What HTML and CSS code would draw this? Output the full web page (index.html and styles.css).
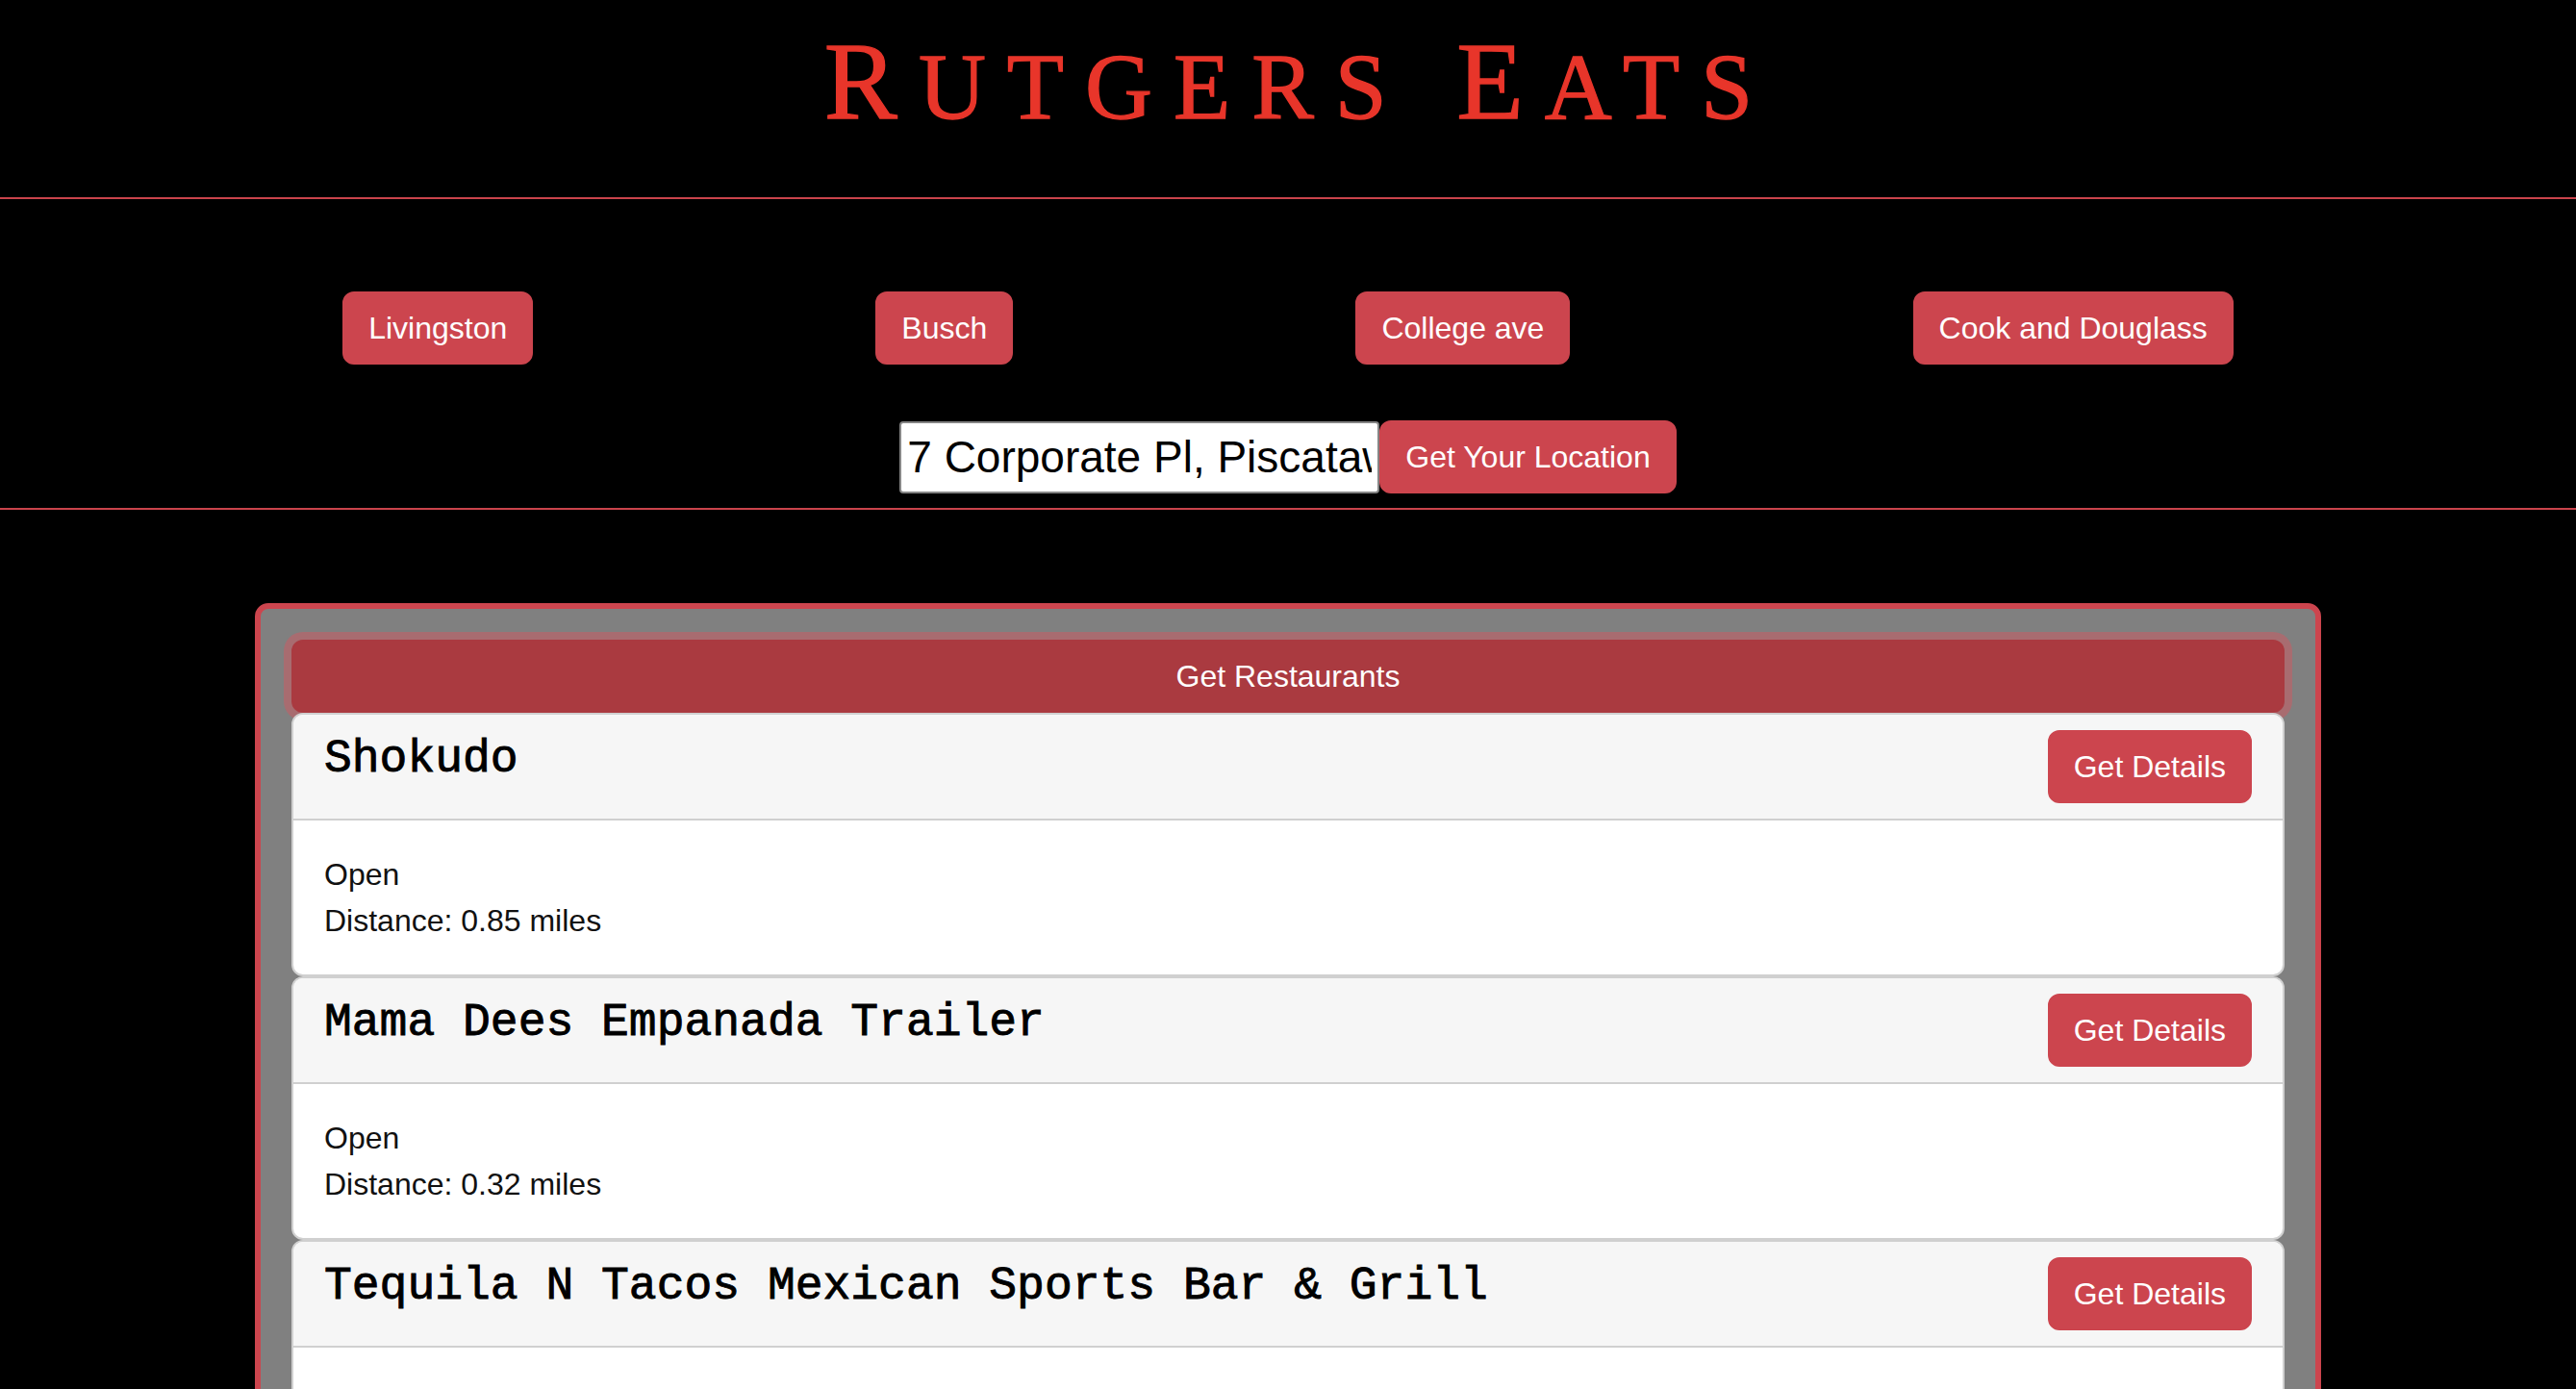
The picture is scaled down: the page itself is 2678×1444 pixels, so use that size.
FILE: index.html
```html
<!DOCTYPE html>
<html lang="en">
<head>
<meta charset="utf-8">
<title>Rutgers Eats</title>
<link rel="stylesheet" href="styles.css">
</head>
<body>
<header class="site-header">
  <h1 class="brand"><span class="brand-cap">R</span><span class="brand-sc">utgers</span> <span class="brand-cap">E</span><span class="brand-sc">ats</span></h1>
</header>
<hr class="rule">
<section class="controls">
  <div class="campus-row">
    <button class="btn">Livingston</button>
    <button class="btn">Busch</button>
    <button class="btn">College ave</button>
    <button class="btn">Cook and Douglass</button>
  </div>
  <div class="location-row">
    <input class="location-input" type="text" value="7 Corporate Pl, Piscataway, NJ 08854">
    <button class="btn">Get Your Location</button>
  </div>
</section>
<hr class="rule">
<main class="main">
  <div class="panel">
    <button class="btn btn-bar">Get Restaurants</button>
    <div class="card">
      <div class="card-header">
        <h3 class="card-title">Shokudo</h3>
        <button class="btn">Get Details</button>
      </div>
      <div class="card-body">
        <p>Open</p>
        <p>Distance: 0.85 miles</p>
      </div>
    </div>
    <div class="card">
      <div class="card-header">
        <h3 class="card-title">Mama Dees Empanada Trailer</h3>
        <button class="btn">Get Details</button>
      </div>
      <div class="card-body">
        <p>Open</p>
        <p>Distance: 0.32 miles</p>
      </div>
    </div>
    <div class="card">
      <div class="card-header">
        <h3 class="card-title">Tequila N Tacos Mexican Sports Bar &amp; Grill</h3>
        <button class="btn">Get Details</button>
      </div>
      <div class="card-body">
        <p>Open</p>
        <p>Distance: 0.41 miles</p>
      </div>
    </div>
  </div>
</main>
</body>
</html>
```

FILE: styles.css
```css
* { box-sizing: border-box; }

html, body {
  margin: 0;
  padding: 0;
  background: #000;
}

body {
  font-family: "Liberation Sans", Arial, sans-serif;
  font-size: 32px;
  color: #111;
}

.site-header {
  padding: 27px 0 62px 23px;
  text-align: center;
}

.brand {
  margin: 0;
  font-family: "Liberation Serif", "Times New Roman", serif;
  font-weight: normal;
  font-size: 114px;
  line-height: 116px;
  color: #e8352a;
  letter-spacing: 22px;
  white-space: nowrap;
  -webkit-text-stroke: 1.3px #e8352a;
}

.brand-sc {
  font-size: 0.85em;
  line-height: 1;
  text-transform: uppercase;
}

.rule {
  margin: 0;
  border: 0;
  border-top: 2px solid #c9434b;
  height: 0;
}

.controls {
  padding: 96px 0 15px;
}

.campus-row {
  display: flex;
  justify-content: space-evenly;
  align-items: center;
}

.location-row {
  margin-top: 58px;
  display: flex;
  justify-content: center;
  align-items: center;
}

.btn {
  font-family: "Liberation Sans", Arial, sans-serif;
  font-size: 32px;
  line-height: 48px;
  padding: 12px 25px;
  border: 2px solid #cc454e;
  border-radius: 12px;
  background: #cc454e;
  color: #fff;
  cursor: pointer;
  white-space: nowrap;
}

.location-input {
  width: 499px;
  height: 75px;
  font-family: "Liberation Sans", Arial, sans-serif;
  font-size: 46px;
  color: #000;
  background: #fff;
  border: 2px solid #858585;
  border-radius: 4px;
  padding: 0 6px;
}

.main {
  padding: 97px 0 60px;
}

.panel {
  width: 2148px;
  margin: 0 auto;
  background: #808080;
  border: 6px solid #cc454e;
  border-radius: 14px;
  padding: 32px;
}

.btn-bar {
  display: block;
  width: 100%;
  background: #aa3a40;
  border-color: #aa3a40;
  box-shadow: 0 0 0 8px #a86c70;
}

.card {
  position: relative;
  background: #fff;
  border: 2px solid #d0d0d0;
  border-radius: 12px;
  overflow: hidden;
}

.card-header {
  display: flex;
  justify-content: space-between;
  align-items: flex-start;
  padding: 16px 32px;
  background: #f6f6f6;
  border-bottom: 2px solid #d0d0d0;
}

.card-title {
  margin: 0;
  padding-top: 2px;
  font-family: "Courier New", "Liberation Mono", monospace;
  font-weight: normal;
  font-size: 48px;
  line-height: 1.2;
  color: #000;
  -webkit-text-stroke: 0.9px #000;
}

.card-body {
  padding: 32px;
}

.card-body p {
  margin: 0;
  line-height: 48px;
}
```
